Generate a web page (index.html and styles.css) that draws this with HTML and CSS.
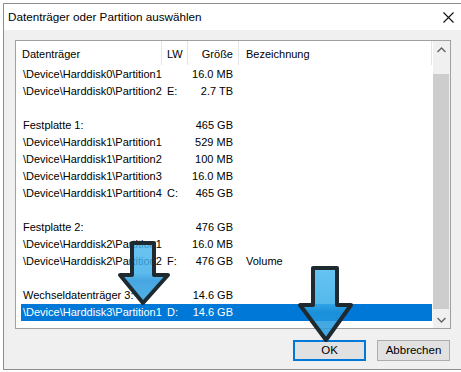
FILE: index.html
```html
<!DOCTYPE html>
<html lang="de">
<head>
    <meta charset="UTF-8">
    <meta name="viewport" content="width=device-width, initial-scale=1.0">
    <title>Datenträger oder Partition auswählen</title>
    <link rel="stylesheet" href="styles.css">
</head>
<body>
    <div class="window">
        <div class="titlebar">
            <span class="title">Datenträger oder Partition auswählen</span>
            <span class="close">
                <svg width="11" height="11" viewBox="0 0 11 11">
                    <path d="M0.5 0.5 L10.5 10.5 M10.5 0.5 L0.5 10.5" stroke="#111" stroke-width="1.1" fill="none"/>
                </svg>
            </span>
        </div>

        <div class="content">
            <div class="listbox">
                <div class="list">
                    <div class="header">
                        <div class="hcell">Datenträger</div>
                        <div class="hcell">LW</div>
                        <div class="hcell right">Größe</div>
                        <div class="hcell last">Bezeichnung</div>
                    </div>
                    <div class="row"><span>\Device\Harddisk0\Partition1</span><span></span><span class="right">16.0 MB</span><span></span></div>
                    <div class="row"><span>\Device\Harddisk0\Partition2</span><span>E:</span><span class="right">2.7 TB</span><span></span></div>
                    <div class="row"><span></span><span></span><span></span><span></span></div>
                    <div class="row"><span>Festplatte 1:</span><span></span><span class="right">465 GB</span><span></span></div>
                    <div class="row"><span>\Device\Harddisk1\Partition1</span><span></span><span class="right">529 MB</span><span></span></div>
                    <div class="row"><span>\Device\Harddisk1\Partition2</span><span></span><span class="right">100 MB</span><span></span></div>
                    <div class="row"><span>\Device\Harddisk1\Partition3</span><span></span><span class="right">16.0 MB</span><span></span></div>
                    <div class="row"><span>\Device\Harddisk1\Partition4</span><span>C:</span><span class="right">465 GB</span><span></span></div>
                    <div class="row"><span></span><span></span><span></span><span></span></div>
                    <div class="row"><span>Festplatte 2:</span><span></span><span class="right">476 GB</span><span></span></div>
                    <div class="row"><span>\Device\Harddisk2\Partition1</span><span></span><span class="right">16.0 MB</span><span></span></div>
                    <div class="row"><span>\Device\Harddisk2\Partition2</span><span>F:</span><span class="right">476 GB</span><span>Volume</span></div>
                    <div class="row"><span></span><span></span><span></span><span></span></div>
                    <div class="row"><span>Wechseldatenträger 3:</span><span></span><span class="right">14.6 GB</span><span></span></div>
                    <div class="row selected"><span>\Device\Harddisk3\Partition1</span><span>D:</span><span class="right">14.6 GB</span><span></span></div>
                </div>
                <div class="scrollbar">
                    <div class="sb-btn">
                        <svg width="9" height="6" viewBox="0 0 9 6"><path d="M0.5 5 L4.5 1 L8.5 5" stroke="#606060" stroke-width="1.3" fill="none"/></svg>
                    </div>
                    <div class="sb-track"><div class="sb-thumb"></div></div>
                    <div class="sb-btn">
                        <svg width="9" height="6" viewBox="0 0 9 6"><path d="M0.5 1 L4.5 5 L8.5 1" stroke="#606060" stroke-width="1.3" fill="none"/></svg>
                    </div>
                </div>
            </div>

            <div class="buttons">
                <button class="btn default">OK</button>
                <button class="btn">Abbrechen</button>
            </div>
        </div>
    </div>

    <!-- annotation arrows drawn on top of the screenshot -->
    <svg class="arrows" width="461" height="372" viewBox="0 0 461 372">
        <defs>
            <linearGradient id="blue" x1="0" y1="0" x2="0" y2="1">
                <stop offset="0" stop-color="#4cb9ef"/>
                <stop offset="0.5" stop-color="#37ace9"/>
                <stop offset="0.62" stop-color="#1f93db"/>
                <stop offset="1" stop-color="#2aa0e2"/>
            </linearGradient>
        </defs>
        <path d="M132 243 H154 V275 H168 L143 303 L120 275 H132 Z" fill="url(#blue)" fill-opacity="0.82" stroke="#1e2a30" stroke-width="4" stroke-linejoin="round"/>
        <path d="M313 268 H337 V305 H351 L326 340 L300 305 H313 Z" fill="url(#blue)" fill-opacity="0.85" stroke="#1e2a30" stroke-width="4" stroke-linejoin="round"/>
    </svg>
</body>
</html>
```

FILE: styles.css
```css
* {
    margin: 0;
    padding: 0;
    box-sizing: border-box;
}

body {
    width: 461px;
    height: 372px;
    overflow: hidden;
    background: #ffffff;
    padding: 3px 0 0 3px;
    font-family: 'Liberation Sans', Arial, sans-serif;
    font-size: 11px;
    color: #000;
    position: relative;
}

.window {
    width: 480px;
    height: 367px;
    border: 1px solid #8e8e8e;
    border-right: none;
    background: #f0f0f0;
}

.titlebar {
    height: 26px;
    background: #fff;
    display: flex;
    align-items: center;
    padding-left: 4px;
}

.title {
    font-size: 11.7px;
    line-height: 16px;
    width: 435px;
}

.close {
    display: flex;
}

.content {
    width: 436px;
    margin-left: 11px;
    padding-top: 10px;
}

.listbox {
    height: 289px;
    border: 1px solid #a0a0a0;
    background: #fff;
    display: flex;
}

.list {
    width: 417px;
}

.header {
    display: grid;
    grid-template-columns: 146px 26px 51px 1fr;
    height: 25px;
    align-items: stretch;
}

.hcell {
    border-right: 1px solid #e5e5e5;
    padding: 5px 0 0 5px;
    line-height: 16px;
    height: 24px;
}

.hcell:first-child {
    padding-left: 6px;
}

.hcell.right {
    text-align: right;
    padding-right: 5px;
}

.hcell.last {
    padding-left: 7px;
}

.row {
    display: grid;
    grid-template-columns: 141px 26px 51px 1fr;
    margin-left: 5px;
    height: 17px;
    line-height: 17px;
    white-space: nowrap;
}

.row span {
    overflow: hidden;
}

.row span:nth-child(1) {
    padding-left: 2px;
}

.row span:nth-child(2) {
    padding-left: 5px;
}

.row span.right {
    text-align: right;
    padding-right: 6px;
}

.row span:nth-child(4) {
    padding-left: 7px;
}

.row.selected {
    background: #0078d7;
    color: #fff;
}

.scrollbar {
    width: 17px;
    margin-left: 1px;
    background: #f0f0f0;
    display: flex;
    flex-direction: column;
}

.sb-btn {
    height: 17px;
    display: flex;
    align-items: center;
    justify-content: center;
}

.sb-track {
    flex: 1;
    padding: 16px 1px 0 0;
}

.sb-thumb {
    height: 235px;
    background: #cdcdcd;
}

.buttons {
    display: flex;
    justify-content: flex-end;
    gap: 11px;
    margin-top: 11px;
    padding-right: 1px;
}

.btn {
    width: 73px;
    height: 21px;
    background: #e1e1e1;
    border: 1px solid #adadad;
    font-family: 'Liberation Sans', Arial, sans-serif;
    font-size: 11.5px;
    color: #000;
    line-height: 17px;
}

.btn.default {
    border: 2px solid #0078d7;
}

.arrows {
    position: absolute;
    left: 0;
    top: 0;
    pointer-events: none;
}
```
